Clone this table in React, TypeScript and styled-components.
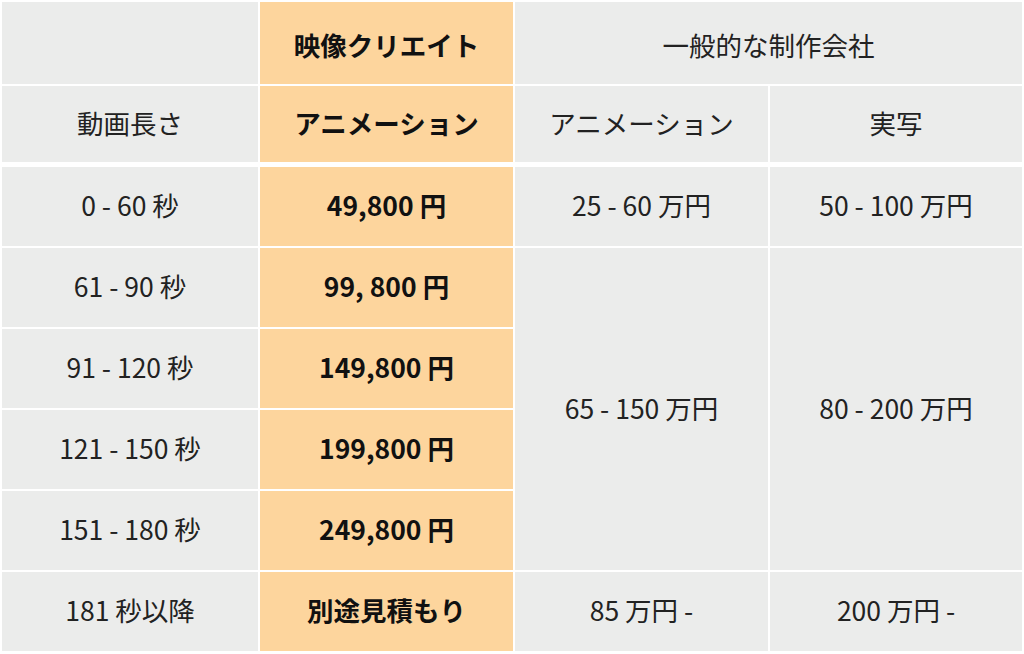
import React from "react";
import styled, { createGlobalStyle } from "styled-components";

const GlobalStyle = createGlobalStyle`
  html, body {
    margin: 0;
    padding: 0;
    background: #ffffff;
  }
  body {
    font-family: "Noto Sans CJK JP", "Noto Sans", sans-serif;
    color: #222222;
  }
`;

const Table = styled.table`
  width: 1024px;
  border-collapse: separate;
  border-spacing: 2px;
  background: #ffffff;
  table-layout: fixed;
  font-size: 26.5px;
  line-height: 1;
`;

const Cell = styled.td<{ $accent?: boolean; $headGap?: boolean }>`
  background: ${(p) => (p.$accent ? "#fdd59d" : "#ebeceb")};
  font-weight: ${(p) => (p.$accent ? 700 : 400)};
  color: ${(p) => (p.$accent ? "#111111" : "#222222")};
  text-align: center;
  vertical-align: middle;
  padding: 0 0 2px;
  border-bottom: ${(p) => (p.$headGap ? "3px solid #ffffff" : "none")};
`;

const TopRow = styled.tr`
  height: 82px;

  & > th {
    padding: 5px 0 0;
  }
`;

const SubRow = styled.tr`
  height: 79px;
`;

const BodyRow = styled.tr`
  height: 79px;
`;

interface PriceRow {
  length: string;
  ours: string;
}

const rows: PriceRow[] = [
  { length: "0 - 60 秒", ours: "49,800 円" },
  { length: "61 - 90 秒", ours: "99, 800 円" },
  { length: "91 - 120 秒", ours: "149,800 円" },
  { length: "121 - 150 秒", ours: "199,800 円" },
  { length: "151 - 180 秒", ours: "249,800 円" },
];

const App: React.FC = () => {
  return (
    <>
      <GlobalStyle />
      <Table>
        <colgroup>
          <col style={{ width: 256 }} />
          <col style={{ width: 253 }} />
          <col style={{ width: 253 }} />
          <col style={{ width: 252 }} />
        </colgroup>
        <thead>
          <TopRow>
            <Cell as="th" />
            <Cell as="th" $accent>
              映像クリエイト
            </Cell>
            <Cell as="th" colSpan={2}>
              一般的な制作会社
            </Cell>
          </TopRow>
          <SubRow>
            <Cell as="th" $headGap>
              動画長さ
            </Cell>
            <Cell as="th" $accent $headGap>
              アニメーション
            </Cell>
            <Cell as="th" $headGap>
              アニメーション
            </Cell>
            <Cell as="th" $headGap>
              実写
            </Cell>
          </SubRow>
        </thead>
        <tbody>
          {rows.map((r, i) => (
            <BodyRow key={r.length}>
              <Cell>{r.length}</Cell>
              <Cell $accent>{r.ours}</Cell>
              {i === 0 && (
                <>
                  <Cell>25 - 60 万円</Cell>
                  <Cell>50 - 100 万円</Cell>
                </>
              )}
              {i === 1 && (
                <>
                  <Cell rowSpan={4}>65 - 150 万円</Cell>
                  <Cell rowSpan={4}>80 - 200 万円</Cell>
                </>
              )}
            </BodyRow>
          ))}
          <BodyRow>
            <Cell>181 秒以降</Cell>
            <Cell $accent>別途見積もり</Cell>
            <Cell>85 万円 -</Cell>
            <Cell>200 万円 -</Cell>
          </BodyRow>
        </tbody>
      </Table>
    </>
  );
};

export default App;
